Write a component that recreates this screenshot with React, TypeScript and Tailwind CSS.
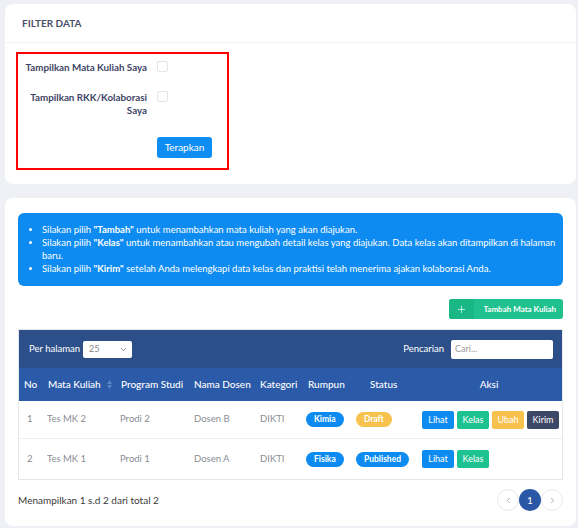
import { ChevronDown, ChevronLeft, ChevronRight, Plus } from 'lucide-react';

const rows = [
  { no: 1, mk: 'Tes MK 2', prodi: 'Prodi 2', dosen: 'Dosen B', kategori: 'DIKTI', rumpun: 'Kimia', status: 'Draft', full: true },
  { no: 2, mk: 'Tes MK 1', prodi: 'Prodi 1', dosen: 'Dosen A', kategori: 'DIKTI', rumpun: 'Fisika', status: 'Published', full: false },
];

const cols = 'grid grid-cols-[23px_73px_73px_66px_46px_50px_66px_1fr] whitespace-nowrap';

export default function App() {
  return (
    <div className="min-h-screen bg-[#eef0f5] px-[5px] pt-[4px] pr-[2px] font-['Lato',sans-serif]">
      {/* Filter card */}
      <div className="rounded-lg bg-white">
        <div className="flex h-[39px] items-center border-b border-[#f1f2f5] px-[17px] text-[10px] font-bold text-[#4b4f6b]">
          FILTER DATA
        </div>
        <div className="px-[11px] pt-[9px] pb-[14px]">
          <div className="w-[213px] border-2 border-[#ff0000] px-0 pt-[7px] pb-[10px]">
            <div className="flex">
              <div className="w-[129px] whitespace-nowrap text-right text-[9.8px] leading-[13px] font-bold text-[#3e4566]">
                Tampilkan Mata Kuliah Saya
              </div>
              <div className="ml-[10px] h-[11px] w-[11px] rounded-[2px] border border-[#e3e5ea]" />
            </div>
            <div className="mt-[17px] flex">
              <div className="w-[129px] whitespace-nowrap text-right text-[9.8px] leading-[13px] font-bold text-[#3e4566]">
                Tampilkan RKK/Kolaborasi
                <br />
                Saya
              </div>
              <div className="ml-[10px] h-[11px] w-[11px] rounded-[2px] border border-[#e3e5ea]" />
            </div>
            <div className="mt-[20px] pl-[139px]">
              <button className="flex h-[21px] w-[55px] items-center justify-center rounded-[3px] bg-[#0e8df2] text-[10px] text-white">
                Terapkan
              </button>
            </div>
          </div>
        </div>
      </div>

      {/* Data card */}
      <div className="mt-[14px] rounded-lg bg-white px-[13px] pt-[15px] pb-[15px]">
        <div className="rounded-md bg-[#0d8bf1] pt-[10px] pr-[5px] pb-[11px] pl-[24px] text-[9.5px] leading-[13px] text-white">
          <ul className="list-disc">
            <li>
              Silakan pilih <b>"Tambah"</b> untuk menambahkan mata kuliah yang akan diajukan.
            </li>
            <li>
              Silakan pilih <b>"Kelas"</b> untuk menambahkan atau mengubah detail kelas yang diajukan. Data kelas akan ditampilkan di halaman baru.
            </li>
            <li>
              Silakan pilih <b>"Kirim"</b> setelah Anda melengkapi data kelas dan praktisi telah menerima ajakan kolaborasi Anda.
            </li>
          </ul>
        </div>

        <div className="mt-[13px] flex justify-end">
          <button className="flex h-[20px] overflow-hidden rounded-[3px] bg-[#1fc28f] text-[8px] font-bold text-white">
            <span className="flex w-[25px] items-center justify-center bg-[#18b784]">
              <Plus size={11} strokeWidth={1.5} />
            </span>
            <span className="flex items-center pr-[7px] pl-[9px]">Tambah Mata Kuliah</span>
          </button>
        </div>

        {/* Table */}
        <div className="mt-[10px] border border-[#e4e6ea]">
          <div className="flex h-[38px] items-center justify-between bg-[#2c4f89] pr-[9px] pl-[10px] text-[9.5px] text-white">
            <div className="flex items-center gap-[3px]">
              <span>Per halaman</span>
              <div className="flex h-[17px] w-[49px] items-center justify-between rounded-[2px] bg-white pr-[4px] pl-[6px] text-[9px] text-[#888]">
                <span>25</span>
                <ChevronDown size={9} className="text-[#666]" />
              </div>
            </div>
            <div className="flex items-center gap-[7px]">
              <span>Pencarian</span>
              <div className="flex h-[19px] w-[102px] items-center rounded-[2px] bg-white pl-[4px] text-[9px] text-[#9a9a9a]">
                Cari...
              </div>
            </div>
          </div>

          <div className={`${cols} h-[33px] items-center bg-[#2a5aa8] text-[10px] font-medium text-white`}>
            <div className="pl-[5px]">No</div>
            <div className="flex items-center pl-[6px]">
              Mata Kuliah
              <span className="ml-[6px] flex flex-col text-[#5b82c4]">
                <svg width="5" height="4" viewBox="0 0 5 4"><path d="M2.5 0L5 4H0z" fill="currentColor" /></svg>
                <svg width="5" height="4" viewBox="0 0 5 4" className="mt-[1px]"><path d="M0 0h5L2.5 4z" fill="currentColor" /></svg>
              </span>
            </div>
            <div className="pl-[6px]">Program Studi</div>
            <div className="pl-[6px]">Nama Dosen</div>
            <div className="pl-[6px]">Kategori</div>
            <div className="pl-[8px]">Rumpun</div>
            <div className="pl-[20px]">Status</div>
            <div className="text-center">Aksi</div>
          </div>

          {rows.map((r, i) => (
            <div
              key={r.no}
              className={`${cols} items-center text-[9.5px] text-[#8a8c95] ${i === 0 ? 'h-[38px] border-b border-[#eceef1]' : 'h-[40px]'}`}
            >
              <div className="pl-[8px]">{r.no}</div>
              <div className="pl-[5px]">{r.mk}</div>
              <div className="pl-[5px]">{r.prodi}</div>
              <div className="pl-[6px]">{r.dosen}</div>
              <div className="pl-[6px]">{r.kategori}</div>
              <div className="pl-[6px]">
                <span className="inline-flex h-[15px] items-center rounded-full bg-[#0d8bf1] px-[8px] text-[8.5px] font-bold text-white">
                  {r.rumpun}
                </span>
              </div>
              <div className="pl-[6px]">
                <span
                  className={`inline-flex h-[15px] items-center rounded-full px-[8px] text-[8.5px] font-bold text-white ${r.status === 'Draft' ? 'bg-[#f8c24f]' : 'bg-[#0d8bf1]'}`}
                >
                  {r.status}
                </span>
              </div>
              <div className="flex gap-[3px] pl-[6px] text-[9px] text-white">
                <span className="flex h-[18px] w-[32px] items-center justify-center rounded-[2px] bg-[#0d8bf1]">Lihat</span>
                <span className="flex h-[18px] w-[32px] items-center justify-center rounded-[2px] bg-[#1cc290]">Kelas</span>
                {r.full && (
                  <>
                    <span className="flex h-[18px] w-[32px] items-center justify-center rounded-[2px] bg-[#f8c24f]">Ubah</span>
                    <span className="flex h-[18px] w-[32px] items-center justify-center rounded-[2px] bg-[#3d4766]">Kirim</span>
                  </>
                )}
              </div>
            </div>
          ))}
        </div>

        <div className="mt-[9px] flex items-center justify-between">
          <span className="text-[10px] text-[#3a3a3a]">Menampilkan 1 s.d 2 dari total 2</span>
          <div className="flex items-center">
            <span className="flex h-[22px] w-[22px] items-center justify-center rounded-full border border-[#e6e8ec] text-[#9a9a9a]">
              <ChevronLeft size={9} />
            </span>
            <span className="flex h-[22px] w-[22px] items-center justify-center rounded-full bg-[#2a58a6] text-[10px] text-white">
              1
            </span>
            <span className="flex h-[22px] w-[22px] items-center justify-center rounded-full border border-[#e6e8ec] text-[#9a9a9a]">
              <ChevronRight size={9} />
            </span>
          </div>
        </div>
      </div>
    </div>
  );
}
